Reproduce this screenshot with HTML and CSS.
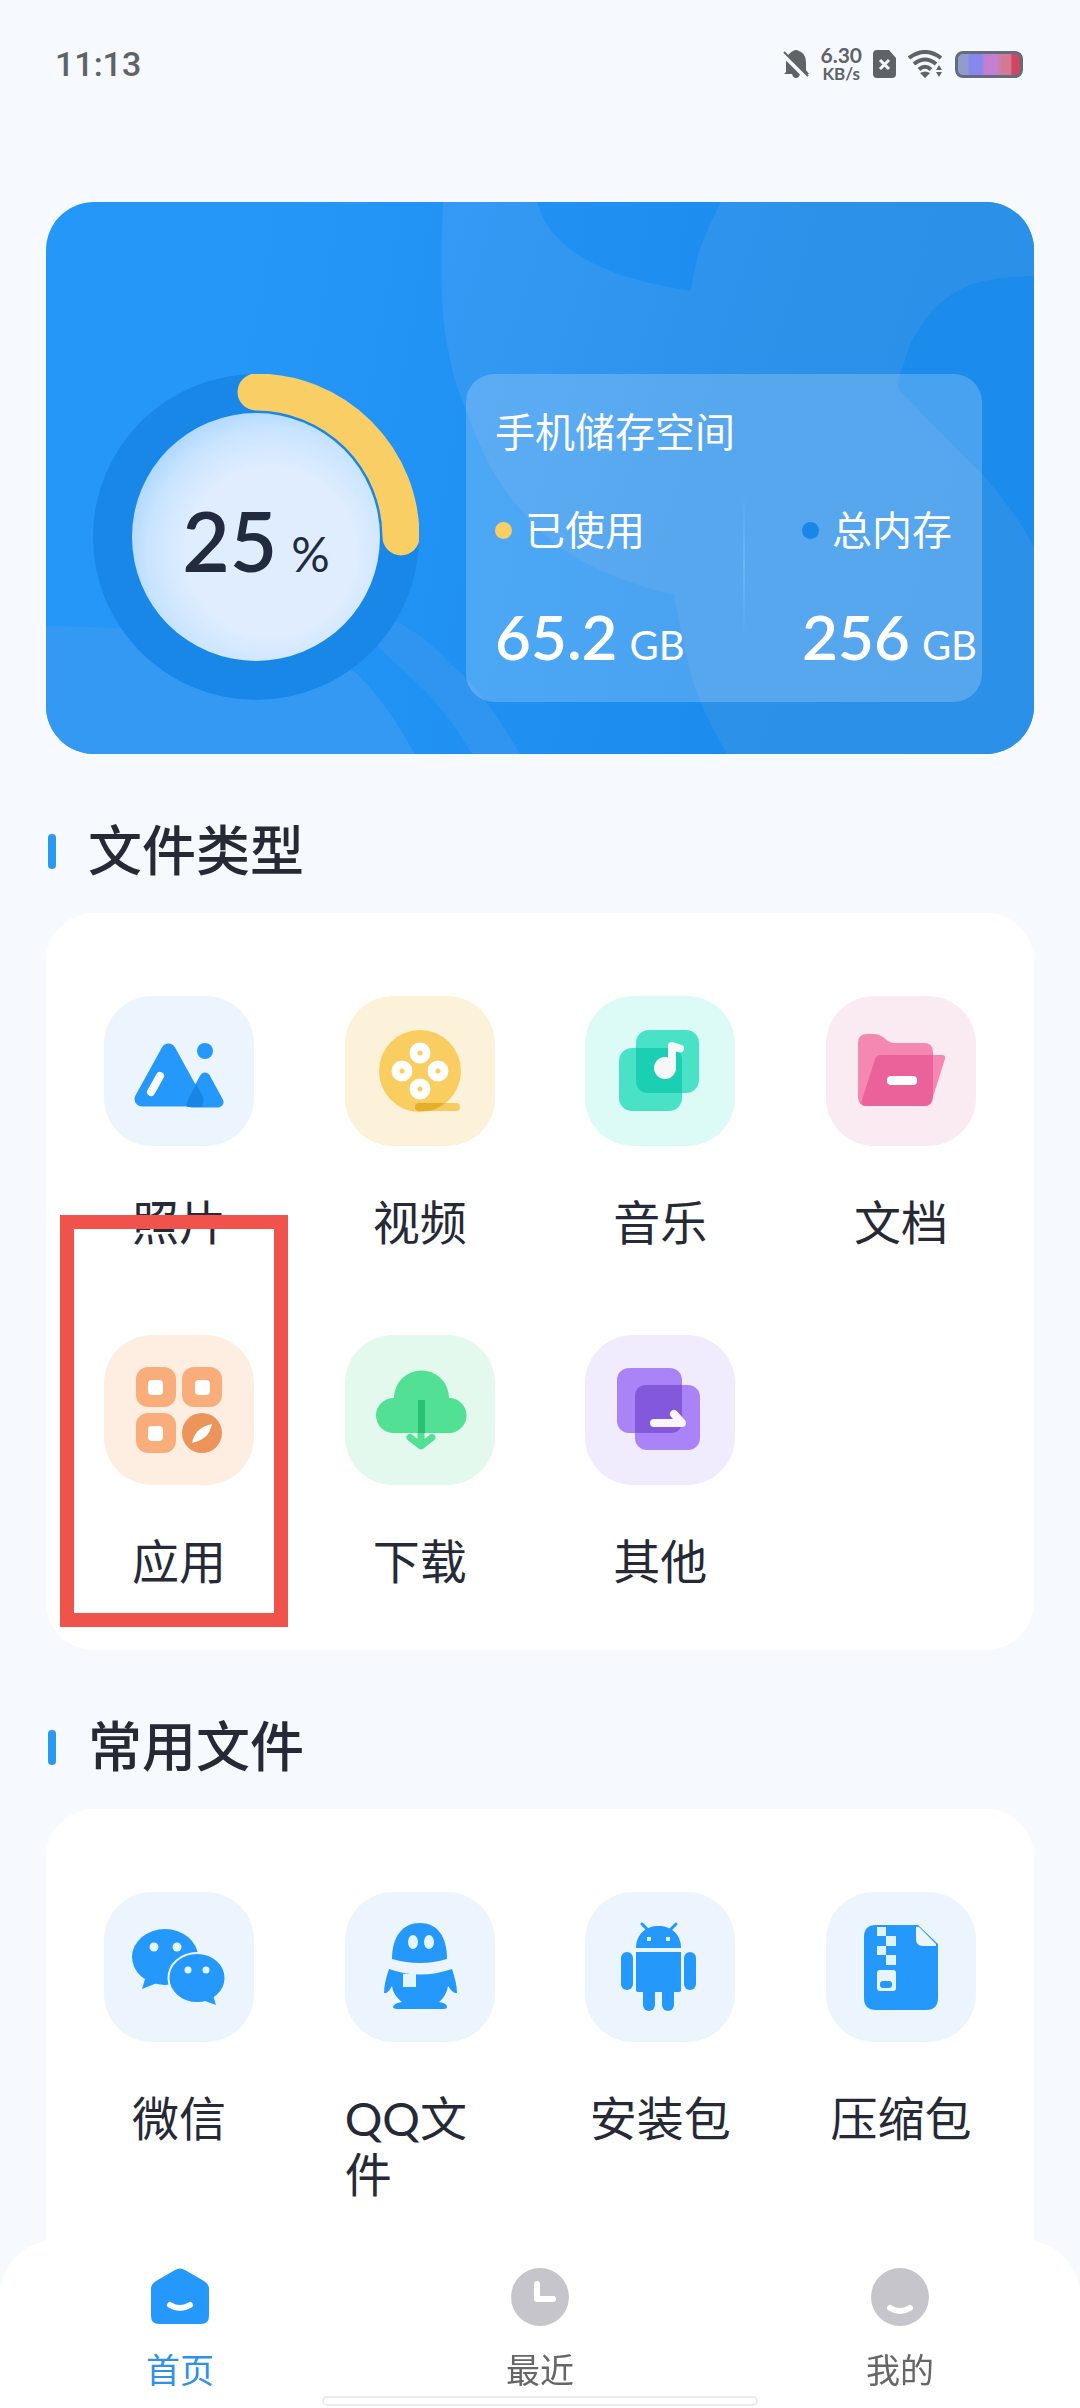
FILE: index.html
```html
<!DOCTYPE html>
<html lang="zh-CN">
<head>
    <meta charset="UTF-8">
    <meta name="viewport" content="width=device-width, initial-scale=1.0">
    <title>文件管理</title>
    <link rel="stylesheet" href="styles.css">
</head>
<body>

    <!-- Status bar -->
    <header class="status-bar">
        <span class="clock">11:13</span>
        <div class="status-icons">
            <svg width="26" height="28" viewBox="0 0 26 28">
                <path d="M3 22V13C3 7 6 3 10 1Q13 -1 16 1C21 3 23 7 23 13V20L26 24H17Q16 28 13 28T9 24H1Z" fill="#5f6368"/>
                <path d="M-1 3L25 29" stroke="#f6f9fe" stroke-width="5"/>
                <path d="M1 2L25 26" stroke="#5f6368" stroke-width="2"/>
            </svg>
            <div class="net-speed">
                <span class="speed">6.30</span>
                <span class="unit">KB/s</span>
            </div>
            <svg width="24" height="28" viewBox="0 0 24 28">
                <path d="M4 0H16L23 8V24Q23 28 19 28H4Q0 28 0 24V4Q0 0 4 0Z" fill="#5f6368"/>
                <path d="M7 10L16 19M16 10L7 19" stroke="#f6f9fe" stroke-width="3"/>
            </svg>
            <svg width="36" height="28" viewBox="0 0 36 28">
                <g fill="none" stroke="#5f6368" stroke-width="4">
                    <path d="M1 8Q17 -4 33 8"/>
                    <path d="M6 14Q17 5 28 14"/>
                    <path d="M11 19.500Q17 14 23 19.500"/>
                </g>
                <path d="M12 23Q17 20 22 23L17 28ZM31 15L34 20H28ZM28 22H34L31 27Z" fill="#5f6368"/>
            </svg>
            <div class="battery"></div>
        </div>
    </header>

    <main>
        <!-- Storage overview -->
        <section class="storage">
            <svg class="storage-bg" viewBox="0 0 988 552" preserveAspectRatio="none">
                <defs>
                    <linearGradient id="petal" x1="0" x2="1" y1="0" y2="0.3">
                        <stop offset="0" stop-color="#359af5"/>
                        <stop offset="0.600" stop-color="#2c91e9"/>
                        <stop offset="1" stop-color="#2b90e8"/>
                    </linearGradient>
                </defs>
                <path fill="url(#petal)" d="M397 0C395 60 394 110 402 146C408 180 413 190 420 208C430 235 437 250 445 265C455 285 468 300 481 315C497 333 512 345 532 357C560 372 590 384 629 393C629 400 630 405 631 407C635 432 640 455 647 479C655 505 668 530 681 552H988V345C975 320 958 298 940 276L853 188C850 178 857 165 859 158C863 140 873 125 884 112C900 92 925 80 944 78C960 75 975 74 988 74V0H675C665 20 655 40 651 58C648 70 646 80 645 89C620 85 595 80 572 72C545 62 525 50 513 37C500 25 495 12 491 0Z"/>
                <path fill="#3499f3" d="M0 424C100 424 240 440 309 470C335 495 350 520 369 552H0Z"/>
                <path fill="#2f95f0" d="M345 416C375 432 395 450 404 462C430 480 455 520 474 552H426C410 525 395 505 377 487L330 443Z"/>
            </svg>

            <div class="ring">
                <svg class="ring-svg" viewBox="0 0 326 326">
                    <defs>
                        <radialGradient id="disc" cx="0.56" cy="0.56" r="0.62">
                            <stop offset="0.550" stop-color="#dfedff"/>
                            <stop offset="0.800" stop-color="#c9e4ff"/>
                            <stop offset="1" stop-color="#a5d4ff"/>
                        </radialGradient>
                    </defs>
                    <circle cx="163" cy="163" r="163" fill="#1987e7"/>
                    <circle cx="163" cy="163" r="124" fill="url(#disc)"/>
                    <path d="M163 18A145 145 0 0 1 308 163" fill="none" stroke="#f9ce65" stroke-width="37" stroke-linecap="round"/>
                </svg>
                <div class="ring-value"><b>25</b><span>%</span></div>
            </div>

            <div class="storage-panel">
                <h2>手机储存空间</h2>
                <div class="stats">
                    <div class="stat">
                        <p class="stat-name"><i class="dot used"></i>已使用</p>
                        <p class="stat-value"><b>65.2</b><span>GB</span></p>
                    </div>
                    <div class="divider"></div>
                    <div class="stat">
                        <p class="stat-name"><i class="dot total"></i>总内存</p>
                        <p class="stat-value"><b>256</b><span>GB</span></p>
                    </div>
                </div>
            </div>
        </section>

        <!-- File types -->
        <h2 class="section-title">文件类型</h2>
        <section class="card">
            <button class="item">
                <svg class="tile blue" viewBox="0 0 150 150">
                    <path d="M38 103L64.500 55L91 103Z" fill="#2499fb" stroke="#2499fb" stroke-width="15" stroke-linejoin="round"/>
                    <path d="M88 106L101 82L114 106Z" fill="#2499fb" stroke="#2499fb" stroke-width="11" stroke-linejoin="round"/>
                    <path d="M92 88L83 106Q81 111 85 111H96Q99 111 99 107Q100 102 98 99Z" fill="#1686e2"/>
                    <circle cx="101" cy="55" r="8" fill="#2499fb"/>
                    <path d="M56 80L47 96" stroke="#fff" stroke-width="8" stroke-linecap="round"/>
                </svg>
                <span>照片</span>
            </button>
            <button class="item">
                <svg class="tile yellow" viewBox="0 0 150 150">
                    <defs><clipPath id="reel"><circle cx="75" cy="75" r="41"/></clipPath></defs>
                    <circle cx="75" cy="75" r="41" fill="#f9cd60"/>
                    <rect x="70" y="107" width="45" height="8" rx="4" fill="#f7cb62"/>
                    <rect x="70" y="107" width="45" height="8" rx="4" fill="#e5af2b" clip-path="url(#reel)"/>
                    <g fill="#f9cd60" stroke="#fff" stroke-width="8">
                        <circle cx="75" cy="57" r="6.500"/>
                        <circle cx="57" cy="75" r="6.500"/>
                        <circle cx="93" cy="75" r="6.500"/>
                        <circle cx="75" cy="93" r="6.500"/>
                    </g>
                </svg>
                <span>视频</span>
            </button>
            <button class="item">
                <svg class="tile teal" viewBox="0 0 150 150">
                    <rect x="34" y="52" width="63" height="63" rx="13" fill="#4ae2c6"/>
                    <rect x="51" y="34" width="63" height="63" rx="13" fill="#4ae2c6"/>
                    <path d="M51 52H84Q97 52 97 65V97H64Q51 97 51 84Z" fill="#1bd0b2"/>
                    <circle cx="80" cy="72" r="11" fill="#f5f8f8"/>
                    <path d="M87 72V50L95 52.500" fill="none" stroke="#f5f8f8" stroke-width="8" stroke-linecap="round" stroke-linejoin="round"/>
                </svg>
                <span>音乐</span>
            </button>
            <button class="item">
                <svg class="tile pink" viewBox="0 0 150 150">
                    <defs><clipPath id="folder"><path d="M32 47Q32 38 41 38H48Q53 38 57 41L62 45Q65 47 69 47H98Q107 47 107 56V101Q107 110 98 110H41Q32 110 32 101Z"/></clipPath></defs>
                    <path d="M32 47Q32 38 41 38H48Q53 38 57 41L62 45Q65 47 69 47H98Q107 47 107 56V101Q107 110 98 110H41Q32 110 32 101Z" fill="#f588b3"/>
                    <path d="M54 59H116Q120 59 119 63L106 104Q104 110 99 110H38Q34 108 36 104L49 63Q51 59 54 59Z" fill="#f588b3"/>
                    <path d="M54 59H116Q120 59 119 63L106 104Q104 110 99 110H38Q34 108 36 104L49 63Q51 59 54 59Z" fill="#eb6199" clip-path="url(#folder)"/>
                    <rect x="61" y="80" width="30" height="9" rx="4" fill="#fff"/>
                </svg>
                <span>文档</span>
            </button>
            <button class="item marked">
                <svg class="tile orange" viewBox="0 0 150 150">
                    <g fill="#f8ad7b">
                        <rect x="32" y="32" width="40" height="40" rx="12"/>
                        <rect x="78" y="32" width="40" height="40" rx="12"/>
                        <rect x="32" y="78" width="40" height="40" rx="12"/>
                    </g>
                    <g fill="#fff">
                        <rect x="44" y="45" width="15" height="15" rx="4"/>
                        <rect x="91" y="45" width="15" height="15" rx="4"/>
                        <rect x="44" y="91" width="15" height="15" rx="4"/>
                    </g>
                    <circle cx="98" cy="98" r="20" fill="#ec955b"/>
                    <path d="M108 89Q106 98 101 102Q96 106 88 108Q90 99 95 95Q99 91 108 89Z" fill="#fff"/>
                </svg>
                <span>应用</span>
            </button>
            <button class="item">
                <svg class="tile green" viewBox="0 0 150 150">
                    <path d="M48 98A17.500 17.500 0 1 1 49 63A27.500 27.500 0 0 1 104 63A17.500 17.500 0 1 1 104 98Z" fill="#51e094"/>
                    <path d="M76 65V108M65 102.500L76 111L87 102.500" fill="none" stroke="#51e094" stroke-width="7" stroke-linecap="round" stroke-linejoin="round"/>
                    <rect x="73" y="65" width="7" height="33" fill="#2ac172"/>
                </svg>
                <span>下载</span>
            </button>
            <button class="item">
                <svg class="tile purple" viewBox="0 0 150 150">
                    <rect x="32" y="33" width="65" height="65" rx="12" fill="#aa83f7"/>
                    <rect x="50" y="50" width="65" height="65" rx="12" fill="#aa83f7"/>
                    <path d="M62 50H97V86Q97 98 85 98H50V62Q50 50 62 50Z" fill="#8358da"/>
                    <path d="M69 88H97L89 79" fill="none" stroke="#f8f5fe" stroke-width="8" stroke-linecap="round" stroke-linejoin="round"/>
                </svg>
                <span>其他</span>
            </button>
        </section>

        <!-- Common files -->
        <h2 class="section-title">常用文件</h2>
        <section class="card card-last">
            <button class="item">
                <svg class="tile blue" viewBox="0 0 150 150">
                    <g fill="#2499fb">
                        <ellipse cx="61" cy="65" rx="33" ry="28"/>
                        <path d="M42 84L38 97L53 91Z"/>
                        <ellipse cx="93" cy="86" rx="28.500" ry="25" stroke="#ecf5fe" stroke-width="2"/>
                        <path d="M101 109L112 113L109 103Z"/>
                    </g>
                    <g fill="#e3f6ff">
                        <circle cx="50" cy="55" r="4.500"/>
                        <circle cx="73" cy="55" r="4.500"/>
                        <circle cx="84" cy="78" r="3.500"/>
                        <circle cx="102" cy="78" r="3.500"/>
                    </g>
                </svg>
                <span>微信</span>
            </button>
            <button class="item">
                <svg class="tile blue" viewBox="0 0 150 150">
                    <path d="M47 67C47 44 58 31 75 31S102 44 102 67Q75 75 47 67Z" fill="#2499fb"/>
                    <path d="M44 77Q75 88 107 77C110 86 112 94 112 101Q108 102 103 94C102 101 98 107 94 110Q102 111 102 115Q102 117 97 117H54Q48 117 48 115Q49 111 57 110C52 106 48 101 47 94Q43 102 39 101C39 94 41 85 44 77Z" fill="#2499fb"/>
                    <g fill="#e3f6ff">
                        <ellipse cx="68" cy="50" rx="5" ry="7"/>
                        <ellipse cx="84" cy="50" rx="5" ry="7"/>
                        <rect x="58" y="82" width="13" height="13"/>
                    </g>
                </svg>
                <span>QQ文件</span>
            </button>
            <button class="item">
                <svg class="tile blue" viewBox="0 0 150 150">
                    <path d="M57 32L64 39M91 32L84 39" stroke="#2499fb" stroke-width="3" stroke-linecap="round"/>
                    <g fill="#2499fb">
                        <path d="M51 56C51 42 61 34 73.500 34S96 42 96 56Z"/>
                        <path d="M51 60H96V98Q96 100 94 100H53Q51 100 51 98Z"/>
                        <rect x="36" y="60" width="12" height="38" rx="6"/>
                        <rect x="99" y="60" width="12" height="38" rx="6"/>
                        <rect x="58" y="90" width="12" height="29" rx="6"/>
                        <rect x="77" y="90" width="12" height="29" rx="6"/>
                    </g>
                    <path d="M62 45H66V49H62ZM81 45H85V49H81Z" fill="#e3f6ff"/>
                </svg>
                <span>安装包</span>
            </button>
            <button class="item">
                <svg class="tile blue" viewBox="0 0 150 150">
                    <path d="M50 33H92L112 52V106Q112 118 100 118H50Q38 118 38 106V45Q38 33 50 33Z" fill="#2499fb"/>
                    <path d="M90 35Q92 34 94 36L110 52V54H97Q90 54 90 47Z" fill="#ecf5fe"/>
                    <path d="M51 35H60V44H70V54H60V44H51ZM51 54H60V63H70V73H60V63H51Z" fill="#dff2ff"/>
                    <rect x="51" y="78" width="19" height="21" rx="3" fill="#e8f5ff"/>
                    <rect x="54" y="89" width="12" height="7" rx="3" fill="#2499fb"/>
                </svg>
                <span>压缩包</span>
            </button>
        </section>
    </main>

    <!-- Bottom navigation -->
    <nav class="tab-bar">
        <a class="tab active" href="#">
            <svg width="58" height="58" viewBox="0 0 58 58">
                <path d="M24 2Q29 -1 34 2L53 13Q58 16 58 21V48Q58 56 50 56H8Q0 56 0 48V21Q0 16 5 13Z" fill="#2499fb"/>
                <path d="M19 37Q29 43 39 37" fill="none" stroke="#fff" stroke-width="6" stroke-linecap="round"/>
            </svg>
            <span>首页</span>
        </a>
        <a class="tab" href="#">
            <svg width="58" height="58" viewBox="0 0 58 58">
                <circle cx="29" cy="29" r="29" fill="#c6c5cb"/>
                <path d="M26 16V31H42" fill="none" stroke="#fff" stroke-width="6" stroke-linecap="round" stroke-linejoin="round"/>
            </svg>
            <span>最近</span>
        </a>
        <a class="tab" href="#">
            <svg width="58" height="58" viewBox="0 0 58 58">
                <circle cx="29" cy="29" r="29" fill="#c6c5cb"/>
                <path d="M19 40Q29 46 39 40" fill="none" stroke="#fff" stroke-width="6" stroke-linecap="round"/>
            </svg>
            <span>我的</span>
        </a>
        <div class="home-indicator"></div>
    </nav>

</body>
</html>
```
FILE: styles.css
```css
* {
    box-sizing: border-box;
    margin: 0;
    padding: 0;
}

body {
    display: flex;
    flex-direction: column;
    min-height: 100vh;
    background: #f6f9fe;
    color: #262936;
    font-family: Lato, "Noto Sans CJK SC", sans-serif;
}

button {
    border: none;
    background: none;
    color: inherit;
    font-family: inherit;
    cursor: pointer;
}

svg {
    display: block;
}

/* Status bar */
.status-bar {
    display: flex;
    align-items: center;
    justify-content: space-between;
    height: 128px;
    padding: 0 57px 0 55px;
    color: #5f6368;
}

.clock {
    font-family: Roboto, sans-serif;
    font-size: 34px;
    font-weight: 500;
}

.status-icons {
    display: flex;
    align-items: center;
    gap: 11px;
}

.net-speed {
    display: flex;
    flex-direction: column;
    align-items: center;
    font-weight: 700;
}

.speed {
    font-size: 21px;
    line-height: 20px;
}

.unit {
    font-size: 17px;
    line-height: 18px;
}

.battery {
    width: 68px;
    height: 27px;
    border: 3px solid #666b7c;
    border-radius: 8px;
    background: linear-gradient(90deg, #939bcd 0 16%, #8788ec 18% 38%, #c57fd0 44% 62%, #d27a92 72% 84%, #d04560 88%);
}

/* Main content */
main {
    display: flex;
    flex-direction: column;
    flex: 1;
    padding: 74px 46px 0;
}

.storage {
    position: relative;
    display: flex;
    align-items: flex-start;
    gap: 47px;
    padding: 172px 52px 52px 47px;
    border-radius: 48px;
    background: linear-gradient(100deg, #2497f9 20%, #1b8bec 75%);
    overflow: hidden;
}

.storage-bg {
    position: absolute;
    top: 0;
    left: 0;
    width: 100%;
    height: 100%;
}

.ring {
    position: relative;
    flex: none;
    width: 326px;
    height: 328px;
}

.ring-value {
    position: absolute;
    inset: 0;
    display: flex;
    align-items: baseline;
    justify-content: center;
    gap: 14px;
    color: #222a3f;
    font-size: 48px;
    line-height: 332px;
}

.ring-value b {
    font-size: 82px;
    font-weight: 600;
}

.storage-panel {
    position: relative;
    flex: 1;
    height: 328px;
    padding: 34px 0 0 29px;
    border-radius: 28px;
    background: rgba(255, 255, 255, 0.2);
    color: #fff;
}

.storage-panel h2 {
    font-size: 40px;
    font-weight: 400;
    line-height: 48px;
}

.stats {
    display: flex;
    margin-top: 50px;
}

.stat:first-child {
    flex: 1;
}

.stat:last-child {
    flex: none;
    width: 180px;
}

.stat-name {
    display: flex;
    align-items: center;
    gap: 13px;
    font-size: 40px;
    line-height: 48px;
}

.stat-value {
    display: flex;
    align-items: baseline;
    gap: 12px;
    margin-top: 46px;
    font-size: 40px;
    line-height: 72px;
}

.stat-value b {
    font-size: 62px;
    font-weight: 600;
}

.dot {
    width: 17px;
    height: 17px;
    border-radius: 50%;
}

.dot.used {
    background: #f9ce65;
}

.dot.total {
    background: #1987e7;
}

.divider {
    width: 2px;
    height: 144px;
    margin: -14px 57px 0 0;
    background: linear-gradient(rgba(120, 195, 250, 0), #6ab8f4, rgba(120, 195, 250, 0));
}

.section-title {
    display: flex;
    align-items: center;
    gap: 32px;
    margin: 65px 0 30px;
    padding-left: 2px;
    font-size: 54px;
    font-weight: 500;
    line-height: 64px;
}

.section-title::before {
    content: "";
    width: 8px;
    height: 35px;
    border-radius: 4px;
    background: #2c98f2;
}

/* Cards with file icons */
.card {
    display: grid;
    grid-template-columns: repeat(4, 150px);
    align-content: start;
    justify-content: space-between;
    row-gap: 85px;
    padding: 83px 58px 61px;
    border-radius: 48px;
    background: #fff;
}

.card-last {
    flex: 1;
    padding-bottom: 168px;
    border-radius: 48px 48px 0 0;
}

.item {
    position: relative;
    display: flex;
    flex-direction: column;
    align-items: center;
    gap: 48px;
    font-size: 47px;
    line-height: 56px;
    text-align: left;
}

.tile {
    width: 150px;
    height: 150px;
    border-radius: 48px;
}

.blue {
    background: #ecf5fe;
}

.yellow {
    background: #fcf1d9;
}

.teal {
    background: #dcfbf6;
}

.pink {
    background: #faebf3;
}

.orange {
    background: #feeee2;
}

.green {
    background: #e3f9ed;
}

.purple {
    background: #f1ebfe;
}

/* Highlight frame around an item */
.marked::after {
    content: "";
    position: absolute;
    inset: -120px -34px -38px -44px;
    border: 14px solid #ef534b;
}

/* Bottom navigation */
.tab-bar {
    position: fixed;
    right: 0;
    bottom: 0;
    left: 0;
    display: flex;
    height: 168px;
    padding-top: 28px;
    border-radius: 56px 56px 0 0;
    background: #fff;
}

.tab {
    display: flex;
    flex: 1;
    flex-direction: column;
    align-items: center;
    gap: 22px;
    color: #666;
    font-size: 34px;
    line-height: 44px;
    text-decoration: none;
}

.tab.active {
    color: #2f92e6;
}

.home-indicator {
    position: absolute;
    bottom: 2px;
    left: 50%;
    width: 436px;
    height: 10px;
    border: 2px solid #ececec;
    border-radius: 5px;
    background: #fff;
    transform: translateX(-50%);
}
```
